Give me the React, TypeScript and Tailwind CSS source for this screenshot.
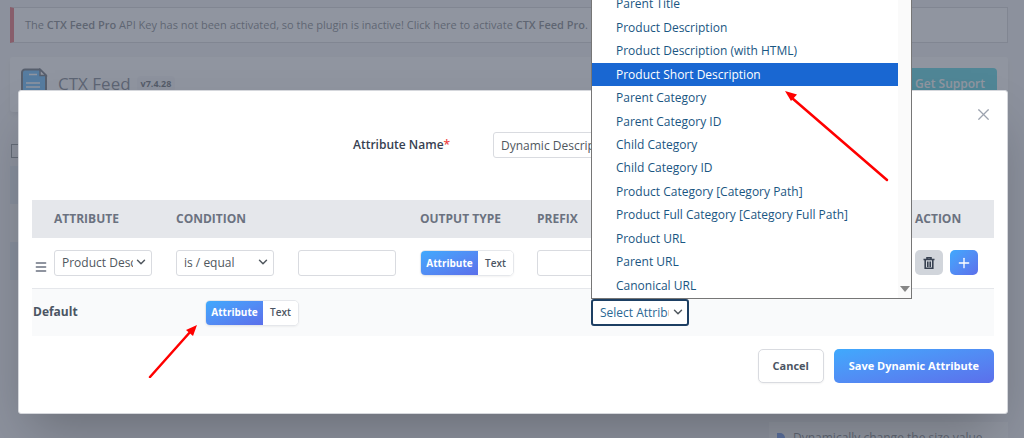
import { ChevronDown, Menu, Plus, X } from "lucide-react";

const options = [
  "Parent Title",
  "Product Description",
  "Product Description (with HTML)",
  "Product Short Description",
  "Parent Category",
  "Parent Category ID",
  "Child Category",
  "Child Category ID",
  "Product Category [Category Path]",
  "Product Full Category [Category Full Path]",
  "Product URL",
  "Parent URL",
  "Canonical URL",
];

const field = "h-[26px] w-[98px] rounded-[3px] border border-[#d9dbe0] bg-white text-[#50575e]";

function Select({ label, value, className = field }: { label: string; value: string; className?: string }) {
  return (
    <span className="relative inline-block align-middle">
      <select aria-label={label} className={`appearance-none pl-[7px] pr-[18px] text-[12px] outline-none ${className}`}>
        <option>{value}</option>
      </select>
      <ChevronDown className="pointer-events-none absolute right-1 top-1.5 size-3.5 text-[#50575e]" strokeWidth={2.5} />
    </span>
  );
}

function Toggle() {
  return (
    <div className="inline-flex h-[26px] overflow-hidden rounded-[5px] border border-[#e5e7eb] align-middle text-[10px] shadow-xs">
      <button className="w-[57px] bg-linear-to-br from-[#3fa9fd] to-[#5b6feb] font-bold text-white">Attribute</button>
      <button className="w-[35px] bg-white font-semibold text-[#4b5563]">Text</button>
    </div>
  );
}

function LogoIcon() {
  return (
    <svg className="h-8 w-7 shrink-0" viewBox="0 0 28 32" fill="none">
      <path d="M5 1.500h15l6 6V32H2V4.500a3 3 0 0 1 3-3z" fill="#1a9cff" stroke="#1f2937" strokeWidth="2" />
      <path d="M20 1.500v6h6z" fill="#fff" stroke="#1f2937" strokeWidth="1.500" />
      <path d="M9 6.500h8M6 15h14M6 19h14M6 23h10" stroke="#fff" strokeWidth="1.600" />
    </svg>
  );
}

function TrashIcon() {
  return (
    <svg className="size-3" viewBox="0 0 12 12" fill="none" stroke="#374151">
      <path d="M0.500 2.500h11M4 2V.8h4V2" strokeWidth="1.600" />
      <path d="M2.200 3v8.200h7.600V3M4.800 4.500v5.500M7.200 4.500v5.500" strokeWidth="1.600" />
    </svg>
  );
}

function Page() {
  return (
    <div className="pl-2.5 pr-4">
      <div className="mt-[7px] border border-l-4 border-[#c3c4c7] border-l-[#e0262c] bg-white py-2 pl-[11px] text-[11px] leading-[18px] text-[#3c434a]">
        The <b className="font-semibold">CTX Feed Pro</b> API Key has not been activated, so the plugin is inactive! Click here to activate{" "}
        <b className="font-semibold">CTX Feed Pro</b>.
      </div>
      <header className="mt-3.5 flex h-[55px] items-start rounded-[3px] bg-white pl-2.5 pr-[11px] pt-[11px] shadow-md">
        <LogoIcon />
        <h1 className="ml-2.5 text-[17px] leading-8 text-[#374151]">CTX Feed</h1>
        <span className="ml-1.5 mt-2 rounded bg-[#f3f4f6] px-1 text-[9px] font-bold leading-4 text-[#111827]">v7.4.28</span>
        <a href="#support" className="ml-auto rounded-[4px] bg-[#00c4d6] py-2 pl-8 pr-3 text-[12px] font-semibold leading-4 text-white">Get Support</a>
      </header>
      <div className="mt-8 flex justify-between">
        <div>
          <input type="checkbox" aria-label="Select all" className="ml-px block size-3.5 appearance-none border border-[#50575e]" />
          <div className="mt-2 w-40">
            <div className="h-[38px] bg-[#d5e4ee]" />
            <div className="h-[38px] bg-[#f6f7f7]" />
            <div className="h-[38px] bg-[#d5e4ee]" />
          </div>
        </div>
        <div className="mt-[278px] w-[239px] bg-white pl-2 pt-2">
          <p className="flex items-center whitespace-nowrap text-[12px] leading-4 text-[#3c434a]">
            <span className="mr-2 h-2.5 w-2 rounded-r-full bg-[#2563eb]" />
            Dynamically change the size value
          </p>
        </div>
      </div>
    </div>
  );
}

function OptionList() {
  return (
    <div className="absolute bottom-full left-0 z-10 flex w-[321px] border border-[#767676] bg-white">
      <ul role="listbox" aria-label="Attributes" className="grid h-[305px] flex-1 auto-rows-fr text-[12px] text-[#1a5682]">
        {options.map((name) => {
          const active = name === "Product Short Description";
          return (
            <li
              key={name}
              role="option"
              aria-selected={active}
              className={`flex items-center whitespace-nowrap pl-6 ${active ? "bg-[#1967d2] text-white" : ""}`}
            >
              {name}
            </li>
          );
        })}
      </ul>
      <div className="flex w-[13px] items-end justify-center bg-[#fafafa] pb-1.5">
        <svg className="h-1.5 w-2.5" viewBox="0 0 10 6">
          <path d="M0 0h10L5 6z" fill="#858585" />
        </svg>
      </div>
    </div>
  );
}

function RulesTable() {
  return (
    <table className="mt-[42px] w-full table-fixed text-left">
      <colgroup>
        <col className="w-[22px]" />
        <col className="w-[122px]" />
        <col className="w-[122px]" />
        <col className="w-[122px]" />
        <col className="w-[117px]" />
        <col className="w-[122px]" />
        <col />
        <col className="w-[122px]" />
        <col className="w-[79px]" />
      </colgroup>
      <thead>
        <tr className="h-[38px] bg-[#e5e7eb] text-[12px] text-[#6b7280]">
          <th />
          <th>ATTRIBUTE</th>
          <th>CONDITION</th>
          <th />
          <th>OUTPUT TYPE</th>
          <th>PREFIX</th>
          <th />
          <th />
          <th>ACTION</th>
        </tr>
      </thead>
      <tbody>
        <tr className="h-[50px] border-b border-[#e5e7eb]">
          <td>
            <Menu className="ml-0.5 mt-2 size-3.5 text-[#6b7280]" strokeWidth={2.5} />
          </td>
          <td><Select label="Attribute" value="Product Description" /></td>
          <td><Select label="Condition" value="is / equal" /></td>
          <td><input aria-label="Value" className={`block ${field}`} /></td>
          <td><Toggle /></td>
          <td><input aria-label="Prefix" className={`block ${field}`} /></td>
          <td />
          <td><input aria-label="Suffix" className={`block ${field}`} /></td>
          <td>
            <div className="flex gap-[7px]">
              <button aria-label="Delete" className="flex h-[25px] w-7 items-center justify-center rounded-[5px] bg-[#d1d5db]">
                <TrashIcon />
              </button>
              <button aria-label="Add" className="flex h-[25px] w-7 items-center justify-center rounded-[5px] bg-linear-to-br from-[#3fa9fd] to-[#5b6feb] text-white">
                <Plus className="size-4" />
              </button>
            </div>
          </td>
        </tr>
        <tr className="h-[48px] bg-[#f9fafb]">
          <th colSpan={2} className="pl-px text-[12px] font-bold text-[#4b5563]">Default</th>
          <td colSpan={3} className="pl-[29px]"><Toggle /></td>
          <td colSpan={4} className="pl-[54px]">
            <div className="relative inline-block align-middle">
              <Select
                label="Default output"
                value="Select Attribute"
                className="h-[27px] w-[98px] rounded-[3px] border-2 border-[#1d3f63] bg-white text-[#2a6794]"
              />
              <OptionList />
            </div>
          </td>
        </tr>
      </tbody>
    </table>
  );
}

function Arrow({ className, d, head, viewBox }: { className: string; d: string; head: string; viewBox: string }) {
  return (
    <svg className={`pointer-events-none absolute z-20 ${className}`} viewBox={viewBox} fill="none">
      <path d={d} stroke="#ff0000" strokeWidth="2.500" strokeLinecap="round" />
      <path d={head} fill="#ff0000" />
    </svg>
  );
}

export default function App() {
  return (
    <main className="relative flow-root h-screen overflow-hidden bg-[#f0f0f1] font-['Open_Sans','Noto_Sans',sans-serif]">
      <Page />
      <div className="absolute inset-0 bg-[#6b7280]/75 pl-[18px] pr-4 pt-[90px]">
        <div role="dialog" aria-label="Dynamic attribute" className="relative rounded-[3px] border border-[#d5d7dc] bg-white px-[13px] pb-[30px] pt-[41px] shadow-2xl">
          <button aria-label="Close" className="absolute right-3.5 top-3.5 text-[#9ca3af]">
            <X className="size-[19px]" strokeWidth={1.5} />
          </button>
          <div className="flex items-center pl-[321px]">
            <label htmlFor="name" className="w-[140px] text-[12px] font-semibold text-[#374151]">
              Attribute Name<span className="text-[#ef4444]">*</span>
            </label>
            <input id="name" defaultValue="Dynamic Description" className="h-[26px] w-[190px] rounded-[3px] border border-[#d9dbe0] px-[7px] text-[12px] text-[#50575e]" />
          </div>
          <RulesTable />
          <div className="mt-[13px] flex justify-end gap-2.5 text-[11px]">
            <button className="h-[34px] w-[66px] rounded-[5px] border border-[#d9dbe0] bg-white font-bold text-[#4b5563] shadow-xs">Cancel</button>
            <button className="h-[34px] rounded-[5px] bg-linear-to-br from-[#3fa9fd] to-[#5b6feb] px-[15px] font-bold text-white">Save Dynamic Attribute</button>
          </div>
        </div>
        <Arrow className="left-[784px] top-[90px] h-[92px] w-[106px]" viewBox="0 0 106 92" d="M103 90L8 8" head="M1 1l12 3.500L7 11z" />
        <Arrow className="left-[148px] top-[324px] h-[54px] w-[50px]" viewBox="0 0 50 54" d="M2 53L43 7" head="M49 1L45 12l-7-6z" />
      </div>
    </main>
  );
}
